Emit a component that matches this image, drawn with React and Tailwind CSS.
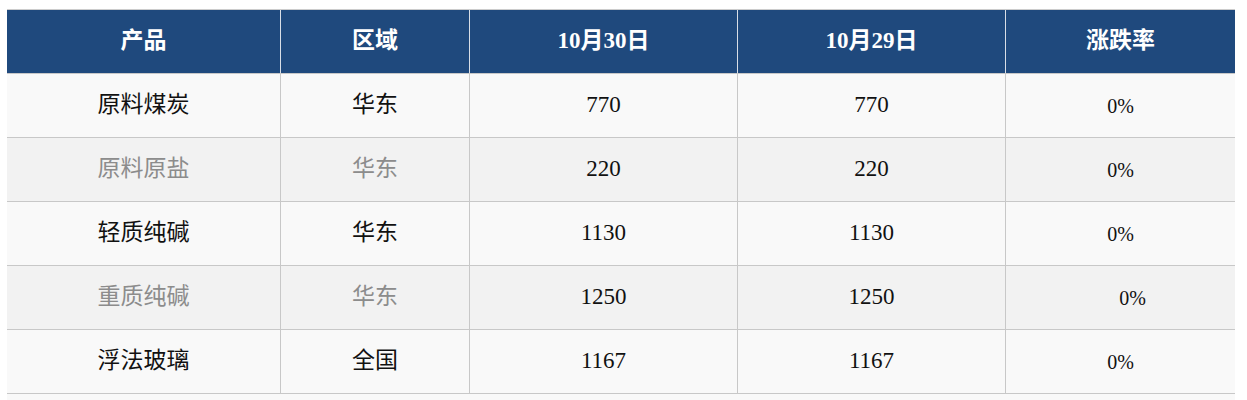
export default function App() {
  const cols = ['w-[273px]', 'w-[189px] border-l', 'w-[268px] border-l', 'w-[268px] border-l', 'w-[230px] border-l'];
  const headers = ['产品', '区域', '10月30日', '10月29日', '涨跌率'];
  const rows = [
    ['原料煤炭', '华东', '770', '770', '0%'],
    ['原料原盐', '华东', '220', '220', '0%'],
    ['轻质纯碱', '华东', '1130', '1130', '0%'],
    ['重质纯碱', '华东', '1250', '1250', '0%'],
    ['浮法玻璃', '全国', '1167', '1167', '0%'],
  ];

  return (
    <div
      className="min-h-[400px] bg-white pt-[9px] pl-[7px]"
      style={{ fontFamily: '"Liberation Serif", "Noto Sans CJK SC", serif' }}
    >
      <div className="w-[1228px] border-t border-[#cccccc]">
        {/* header */}
        <div className="flex h-[64px] bg-[#1f497d] border-b border-[#c8c8c8]">
          {headers.map((h, i) => (
            <div
              key={h}
              className={`${cols[i]} border-[#d9dee6] flex items-center justify-center text-[23px] font-bold text-white`}
            >
              {h}
            </div>
          ))}
        </div>

        {rows.map((r, ri) => {
          const even = ri % 2 === 1;
          return (
            <div
              key={r[0]}
              className={`flex h-[64px] border-b border-[#c8c8c8] ${even ? 'bg-[#f2f2f2]' : 'bg-[#f9f9f9]'}`}
            >
              {r.map((c, ci) => (
                <div
                  key={ci}
                  className={`${cols[ci]} border-[#c8c8c8] flex items-center justify-center ${
                    ci === 4 ? 'text-[20px]' : 'text-[23px]'
                  } ${even && ci < 2 ? 'text-[#8c8c8c]' : 'text-[#111111]'} ${
                    ri === 3 && ci === 4 ? 'pl-[24px]' : ''
                  }`}
                >
                  {c}
                </div>
              ))}
            </div>
          );
        })}
        <div className="h-[6px] bg-[#f9f9f9]" />
      </div>
    </div>
  );
}
